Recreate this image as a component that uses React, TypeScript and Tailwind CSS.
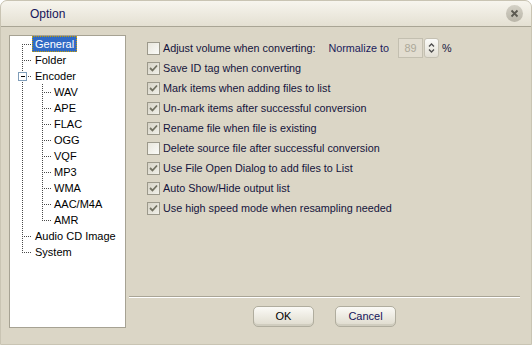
import type { ReactNode } from "react";

type TreeItem = { label: string; level: 0 | 1; selected?: boolean };

const treeItems: TreeItem[] = [
  { label: "General", level: 0, selected: true },
  { label: "Folder", level: 0 },
  { label: "Encoder", level: 0 },
  { label: "WAV", level: 1 },
  { label: "APE", level: 1 },
  { label: "FLAC", level: 1 },
  { label: "OGG", level: 1 },
  { label: "VQF", level: 1 },
  { label: "MP3", level: 1 },
  { label: "WMA", level: 1 },
  { label: "AAC/M4A", level: 1 },
  { label: "AMR", level: 1 },
  { label: "Audio CD Image", level: 0 },
  { label: "System", level: 0 },
];

const options = [
  { label: "Save ID tag when converting", checked: true },
  { label: "Mark items when adding files to list", checked: true },
  { label: "Un-mark items after successful conversion", checked: true },
  { label: "Rename file when file is existing", checked: true },
  { label: "Delete source file after successful conversion", checked: false },
  { label: "Use File Open Dialog to add files to List", checked: true },
  { label: "Auto Show/Hide output list", checked: true },
  { label: "Use high speed mode when resampling needed", checked: true },
];

const Checkbox = ({ checked }: { checked: boolean }) => (
  <span
    className={`flex h-[13px] w-[13px] shrink-0 items-center justify-center border border-[#9c998b] ${
      checked
        ? "bg-gradient-to-br from-[#d6d3c6] to-[#f2f1ea]"
        : "bg-gradient-to-br from-[#e8e6dc] to-[#fbfbf8]"
    }`}
  >
    {checked ? (
      <svg width="9" height="9" viewBox="0 0 9 9">
        <path d="M1 4 L3.5 6.5 L8 1.5" fill="none" stroke="#737262" strokeWidth="1.8" />
      </svg>
    ) : null}
  </span>
);

const OptionRow = ({ checked, children }: { checked: boolean; children: ReactNode }) => (
  <div className="flex h-[20px] items-center">
    <Checkbox checked={checked} />
    <span className="ml-[3px] whitespace-nowrap text-[#14143c]">{children}</span>
  </div>
);

const TreeLines = () => (
  <svg
    className="pointer-events-none absolute left-0 top-0"
    width="115"
    height="230"
    viewBox="0 0 115 230"
    shapeRendering="crispEdges"
  >
    <g stroke="#4a4a4a" strokeDasharray="1 1" fill="none">
      <path d="M12.5 8 V217" />
      <path d="M12 8.5 H22" />
      <path d="M12 24.5 H22" />
      <path d="M16 40.5 H22" />
      <path d="M12 200.5 H22" />
      <path d="M12 216.5 H22" />
      <path d="M32.5 48 V185" />
      {[56, 72, 88, 104, 120, 136, 152, 168, 184].map((y) => (
        <path key={y} d={`M32 ${y + 0.5} H41`} />
      ))}
    </g>
    <rect x="8.5" y="36.5" width="8" height="8" fill="#fff" stroke="#7f9db9" />
    <path d="M10.5 40.5 H15" stroke="#000" />
  </svg>
);

export default function App() {
  return (
    <div
      className="flex h-[345px] w-[532px] flex-col overflow-hidden rounded-t-[7px] border border-[#c9c4b3] bg-[#dbd6c6] text-[11px]"
      style={{ fontFamily: '"Liberation Sans", Arial, sans-serif' }}
    >
      {/* title bar */}
      <div className="flex h-[26px] shrink-0 items-center justify-between border-b border-[#a9a595] bg-gradient-to-b from-[#f7f5ee] to-[#e4e0d2] pl-[29px] pr-[8px]">
        <span className="text-[12px] text-[#15155a]">Option</span>
        <span className="flex h-[17px] w-[17px] items-center justify-center rounded-full bg-gradient-to-b from-[#d4d1c6] to-[#b9b5a8]">
          <svg width="9" height="9" viewBox="0 0 9 9">
            <path d="M1.5 1.5 L7.5 7.5 M7.5 1.5 L1.5 7.5" stroke="#5c5a52" strokeWidth="1.8" />
          </svg>
        </span>
      </div>

      {/* body */}
      <div className="flex flex-1 pl-[8px] pt-[8px]">
        <div className="relative h-[293px] w-[117px] shrink-0 border border-[#a6a293] bg-white text-black">
          <TreeLines />
          <div className="relative">
            {treeItems.map((item) => (
              <div
                key={item.label}
                className={`flex h-[16px] items-center ${item.level === 0 ? "pl-[22px]" : "pl-[41px]"}`}
              >
                <span
                  className={`px-[2px] leading-[14px] ${
                    item.selected
                      ? "border border-dotted border-[#c8a000] bg-[#316ac5] text-white"
                      : "border border-transparent"
                  }`}
                >
                  {item.label}
                </span>
              </div>
            ))}
          </div>
        </div>

        <div className="ml-[3px] mr-[11px] flex h-[293px] flex-1 flex-col">
          <div className="flex-1 pl-[18px] pt-[3px] text-[10.8px]">
            <div className="flex h-[20px] items-center">
              <Checkbox checked={false} />
              <span className="ml-[3px] whitespace-nowrap text-[#14143c]">
                Adjust volume when converting:
              </span>
              <span className="ml-[13px] whitespace-nowrap text-[#1c1c5c]">Normalize to</span>
              <div className="ml-[9px] flex h-[20px] items-center">
                <span className="flex h-[20px] w-[25px] items-center justify-center border border-[#c3bfb0] bg-[#e2ddd0] text-[#aca899]">
                  89
                </span>
                <span className="ml-[1px] flex h-[20px] w-[15px] flex-col items-center justify-center rounded-[3px] border border-[#c4c0b2] bg-gradient-to-b from-[#fbfbf8] to-[#e2dfd4]">
                  <svg width="7" height="12" viewBox="0 0 7 12">
                    <path d="M1 4.5 L3.5 2 L6 4.5 M1 7.5 L3.5 10 L6 7.5" fill="none" stroke="#4d4d4d" strokeWidth="1.3" />
                  </svg>
                </span>
                <span className="ml-[3px] text-[#14143c]">%</span>
              </div>
            </div>
            {options.map((o) => (
              <OptionRow key={o.label} checked={o.checked}>
                {o.label}
              </OptionRow>
            ))}
          </div>

          <div className="h-[2px] border-t border-[#a9a596] border-b-white" style={{ borderBottomWidth: 1 }} />

          <div className="flex h-[30px] items-start justify-center gap-[21px] pt-[8px]">
            <button className="h-[21px] w-[61px] rounded-[5px] border border-[#b0ad9e] bg-gradient-to-b from-[#fbfaf6] to-[#dedbcd] text-[11px] text-black shadow-[inset_0_-2px_0_#d0cdbf]">
              OK
            </button>
            <button className="h-[21px] w-[61px] rounded-[5px] border border-[#b0ad9e] bg-gradient-to-b from-[#fbfaf6] to-[#dedbcd] text-[11px] text-[#14145a] shadow-[inset_0_-2px_0_#d0cdbf]">
              Cancel
            </button>
          </div>
        </div>
      </div>
    </div>
  );
}
